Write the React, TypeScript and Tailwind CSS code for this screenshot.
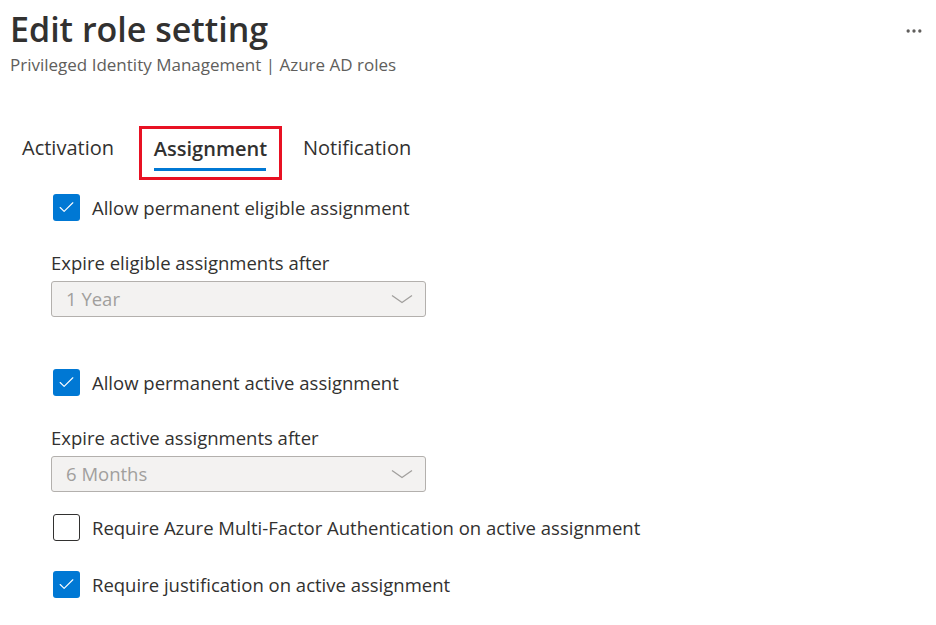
import { Check, MoreHorizontal } from 'lucide-react'

function CheckRow({ label, checked }: { label: string; checked: boolean }) {
  return (
    <div className="flex h-[27px] items-center">
      <div
        className={
          checked
            ? 'flex h-[27px] w-[27px] items-center justify-center rounded-[3px] bg-[#0078d4]'
            : 'h-[27px] w-[27px] rounded-[3px] border border-[#323130] bg-white'
        }
      >
        {checked && <Check size={19} strokeWidth={1.4} color="#ffffff" />}
      </div>
      <span className="ml-[12px] text-[18.5px] text-[#323130]">{label}</span>
    </div>
  )
}

function Expire({ label, value }: { label: string; value: string }) {
  return (
    <div>
      <div className="text-[18.5px] leading-[24px] text-[#323130]">{label}</div>
      <div className="mt-[6px] flex h-[36px] w-[375px] items-center justify-between rounded-[3px] border border-[#b3b0ad] bg-[#f3f2f1] pl-[14px] pr-[12px]">
        <span className="text-[18.5px] text-[#a19f9d]">{value}</span>
        <svg width="22" height="10" viewBox="0 0 22 10" fill="none">
          <path d="M1 1.5 L11 8.5 L21 1.5" stroke="#a19f9d" strokeWidth="1.3" />
        </svg>
      </div>
    </div>
  )
}

export default function App() {
  return (
    <div className="h-[625px] w-[936px] bg-white font-['Open_Sans',sans-serif] text-[#323130]">
      <div className="flex justify-between pl-[10px] pr-[12px] pt-[8px]">
        <div>
          <h1 className="text-[34px] font-semibold leading-[42px] text-[#323130]">Edit role setting</h1>
          <div className="mt-[4px] text-[17px] leading-[22px] text-[#605e5c]">
            Privileged Identity Management | Azure AD roles
          </div>
        </div>
        <MoreHorizontal size={20} strokeWidth={2} color="#605e5c" className="mt-[13px]" />
      </div>

      <div className="mt-[50px] flex items-start pl-[22px] text-[20px]">
        <span className="pt-[9px] leading-[26px]">Activation</span>
        <div className="ml-[25px] flex h-[54px] w-[143px] flex-col items-center justify-center border-[3px] border-[#e81123]">
          <span className="font-semibold leading-[26px]">Assignment</span>
          <div className="mt-[6px] h-[3px] w-[112px] bg-[#0078d4]" />
        </div>
        <span className="ml-[21px] pt-[9px] leading-[26px]">Notification</span>
      </div>

      <div className="pl-[53px] pt-[14px]">
        <CheckRow label="Allow permanent eligible assignment" checked />
      </div>
      <div className="pl-[51px] pt-[30px]">
        <Expire label="Expire eligible assignments after" value="1 Year" />
      </div>
      <div className="pl-[53px] pt-[52px]">
        <CheckRow label="Allow permanent active assignment" checked />
      </div>
      <div className="pl-[51px] pt-[30px]">
        <Expire label="Expire active assignments after" value="6 Months" />
      </div>
      <div className="pl-[53px] pt-[22px]">
        <CheckRow label="Require Azure Multi-Factor Authentication on active assignment" checked={false} />
      </div>
      <div className="pl-[53px] pt-[30px]">
        <CheckRow label="Require justification on active assignment" checked />
      </div>
    </div>
  )
}
